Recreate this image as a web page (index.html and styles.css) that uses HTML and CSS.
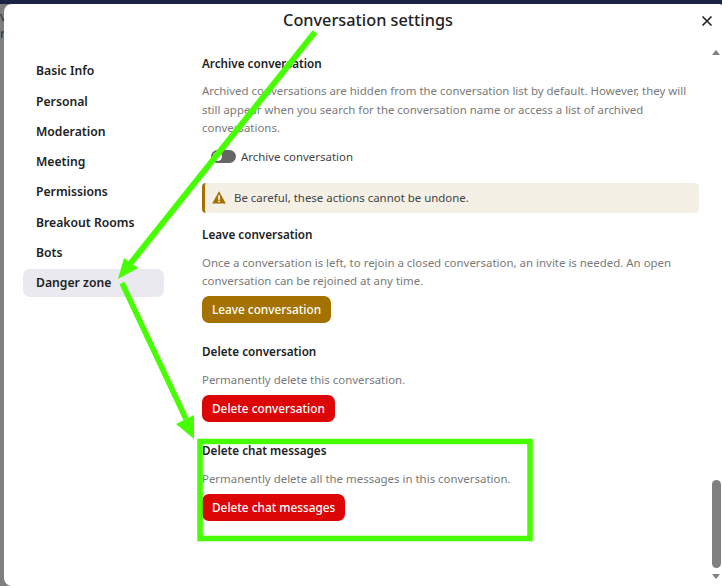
FILE: index.html
```html
<!DOCTYPE html>
<html lang="en">
<head>
  <meta charset="utf-8">
  <title>Conversation settings</title>
  <link rel="stylesheet" href="styles.css">
</head>
<body>
  <div class="backdrop-text">
    <span class="backdrop-name">v</span>
    <span class="backdrop-sub">r</span>
  </div>

  <div class="modal">
    <header class="modal-header">
      <h2 class="modal-title">Conversation settings</h2>
      <button class="close-button" aria-label="Close">
        <svg width="16" height="16" viewBox="0 0 16 16"><path d="M3.5 3.5l9 9M12.5 3.5l-9 9" stroke="#222" stroke-width="1.6" fill="none"/></svg>
      </button>
    </header>

    <div class="modal-body">
      <nav class="side-nav">
        <a class="nav-item">Basic Info</a>
        <a class="nav-item">Personal</a>
        <a class="nav-item">Moderation</a>
        <a class="nav-item">Meeting</a>
        <a class="nav-item">Permissions</a>
        <a class="nav-item">Breakout Rooms</a>
        <a class="nav-item">Bots</a>
        <a class="nav-item nav-item-active">Danger zone</a>
      </nav>

      <main class="content">
        <section class="section section-archive">
          <h3 class="section-title">Archive conversation</h3>
          <p class="section-text">Archived conversations are hidden from the conversation list by default. However, they will still appear when you search for the conversation name or access a list of archived conversations.</p>
          <div class="switch-row">
            <span class="switch"><span class="switch-knob"></span></span>
            <span class="switch-label">Archive conversation</span>
          </div>
        </section>

        <div class="warning">
          <svg class="warning-icon" width="14" height="13" viewBox="0 0 14 13"><path d="M7 .3L13.8 12.6H.2z" fill="#a37200"/><rect x="6.2" y="4.2" width="1.6" height="4.6" fill="#fff"/><rect x="6.2" y="9.6" width="1.6" height="1.6" fill="#fff"/></svg>
          <span>Be careful, these actions cannot be undone.</span>
        </div>

        <section class="section">
          <h3 class="section-title">Leave conversation</h3>
          <p class="section-text">Once a conversation is left, to rejoin a closed conversation, an invite is needed. An open conversation can be rejoined at any time.</p>
          <button class="action-button button-warning">Leave conversation</button>
        </section>

        <section class="section">
          <h3 class="section-title">Delete conversation</h3>
          <p class="section-text">Permanently delete this conversation.</p>
          <button class="action-button button-danger">Delete conversation</button>
        </section>

        <section class="section">
          <h3 class="section-title">Delete chat messages</h3>
          <p class="section-text">Permanently delete all the messages in this conversation.</p>
          <button class="action-button button-danger">Delete chat messages</button>
        </section>
      </main>

      <div class="scrollbar">
        <span class="scroll-arrow scroll-up"></span>
        <span class="scroll-thumb"></span>
        <span class="scroll-arrow scroll-down"></span>
      </div>
    </div>
  </div>

  <!-- annotations drawn over the screenshot -->
  <svg class="annotations" width="722" height="586" viewBox="0 0 722 586">
    <path d="M315 32L130 264" stroke="#46ff00" stroke-width="6" fill="none"/>
    <path d="M118 279L124 258 138 268z" fill="#46ff00"/>
    <path d="M122 283L186 419" stroke="#46ff00" stroke-width="5.5" fill="none"/>
    <path d="M194 439L194 415 176 424z" fill="#46ff00"/>
    <rect x="200" y="441.5" width="330" height="97" stroke="#46ff00" stroke-width="5.5" fill="none"/>
  </svg>
</body>
</html>
```

FILE: styles.css
```css
html, body {
  height: 100%;
}

body {
  margin: 0;
  overflow: hidden;
  background: #7f7f7f;
  border-top: 4px solid #1c2444;
  box-sizing: border-box;
  font-family: "Noto Sans", "Open Sans", sans-serif;
  color: #222;
  display: flex;
  position: relative;
}

.backdrop-text {
  width: 4px;
  flex: none;
  overflow: hidden;
  font-size: 13px;
  line-height: 14px;
  color: #2a3040;
  display: flex;
  flex-direction: column;
  gap: 3px;
  padding-top: 5px;
}

.modal {
  flex: 1;
  background: #fff;
  border-radius: 8px 3px 0 8px;
  display: flex;
  flex-direction: column;
  min-width: 0;
}

.modal-header {
  height: 42px;
  flex: none;
  display: flex;
  align-items: center;
  justify-content: center;
  padding-left: 10px;
  position: relative;
}

.modal-title {
  margin: -11px 0 0;
  font-size: 16.3px;
  font-weight: 500;
  color: #222;
}

.close-button {
  position: absolute;
  top: 9px;
  right: 7px;
  width: 16px;
  height: 16px;
  padding: 0;
  border: 0;
  background: none;
  display: flex;
}

.modal-body {
  flex: 1;
  display: flex;
  min-height: 0;
}

.side-nav {
  width: 141px;
  margin-left: 19px;
  flex: none;
  display: flex;
  flex-direction: column;
  gap: 2.3px;
  padding-top: 11.3px;
}

.nav-item {
  height: 28px;
  line-height: 28px;
  padding-left: 13px;
  border-radius: 7px;
  font-size: 12.2px;
  font-weight: 600;
  color: #222;
}

.nav-item-active {
  background: #e9e9ef;
}

.content {
  flex: 1;
  min-width: 0;
  margin-left: 38px;
  padding-top: 8px;
}

.section {
  width: 497px;
  margin-bottom: 19px;
}

.section-archive {
  margin-bottom: 17px;
}

.section-title {
  margin: 0;
  font-size: 11.7px;
  line-height: 18px;
  font-weight: 600;
  color: #222;
}

.section-text {
  margin: 11px 0 5px;
  font-size: 11.45px;
  line-height: 18.5px;
  color: #7a7a7a;
}

.section-archive .section-text {
  margin: 10px 0 6px;
}

.switch-row {
  display: flex;
  align-items: center;
  height: 18px;
  margin-left: 9px;
  gap: 5px;
  margin-top: 10px;
}

.switch {
  width: 25px;
  height: 13px;
  border-radius: 7px;
  background: #666;
  display: block;
  position: relative;
}

.switch-knob {
  position: absolute;
  left: 2px;
  top: 2px;
  width: 9px;
  height: 9px;
  border-radius: 50%;
  background: #fff;
}

.switch-label {
  font-size: 11.45px;
  color: #444;
}

.warning {
  width: 497px;
  height: 30px;
  box-sizing: border-box;
  display: flex;
  align-items: center;
  gap: 8px;
  padding-left: 7px;
  background: #f4f0e5;
  border-left: 3px solid #a37200;
  border-radius: 4px;
  font-size: 11.45px;
  color: #444;
  margin-bottom: 12px;
}

.action-button {
  display: block;
  height: 27.5px;
  padding: 0 10px;
  border: 0;
  border-radius: 7px;
  color: #fff;
  font-family: inherit;
  font-size: 11.8px;
  font-weight: 500;
}

.button-warning {
  background: #a37200;
}

.button-danger {
  background: #dd0606;
}

.scrollbar {
  width: 10px;
  flex: none;
  position: relative;
}

.scroll-arrow {
  position: absolute;
  left: 0;
  width: 0;
  height: 0;
  border-left: 4.5px solid transparent;
  border-right: 4.5px solid transparent;
}

.scroll-up {
  top: 4px;
  border-bottom: 5px solid #808080;
}

.scroll-down {
  bottom: 7px;
  border-top: 5px solid #808080;
}

.scroll-thumb {
  position: absolute;
  top: 434px;
  left: 0;
  width: 9px;
  height: 88px;
  border-radius: 4.5px;
  background: #808080;
}

.annotations {
  position: absolute;
  left: 0;
  top: -4px;
  pointer-events: none;
}
```
